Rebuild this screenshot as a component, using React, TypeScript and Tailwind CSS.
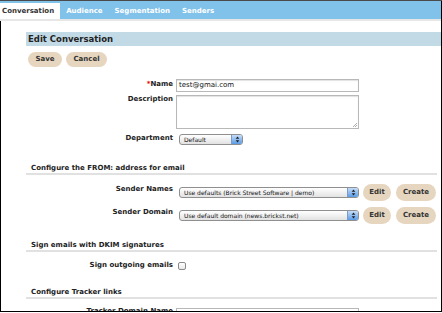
import type { ReactNode } from 'react'

const labelCls = 'w-[147px] shrink-0 text-right text-[7px] font-bold leading-[9px] text-[#222]'

function Pill({ children, className = '' }: { children: ReactNode; className?: string }) {
  return (
    <div
      className={`flex items-center justify-center rounded-full bg-[#e6d6bf] text-[7px] font-bold text-[#333] ${className}`}
    >
      {children}
    </div>
  )
}

function Select({ value, className = '' }: { value: string; className?: string }) {
  return (
    <div
      className={`flex h-[11px] items-stretch overflow-hidden rounded-[3px] border border-[#8f8f8f] bg-linear-to-b from-white to-[#e2e2e2] ${className}`}
    >
      <span className="flex flex-1 items-center whitespace-nowrap pl-[4px] text-[6px] leading-none text-[#111]">
        {value}
      </span>
      <span className="flex w-[11px] items-center justify-center border-l border-[#7a9cc8] bg-linear-to-b from-[#c4dcf8] to-[#5a9be6]">
        <svg width="5" height="7" viewBox="0 0 5 7">
          <path d="M2.5 0.5 L4.3 2.8 H0.7 Z" fill="#1c1c1c" />
          <path d="M2.5 6.5 L0.7 4.2 H4.3 Z" fill="#1c1c1c" />
        </svg>
      </span>
    </div>
  )
}

function Section({ title, className = '' }: { title: string; className?: string }) {
  return (
    <div
      className={`mr-[4px] border-b-2 border-[#e1e1e1] pl-[5px] text-[7px] font-bold leading-[10px] text-[#222] ${className}`}
    >
      {title}
    </div>
  )
}

export default function App() {
  return (
    <div
      className="h-[313px] w-[442px] overflow-hidden border-t border-[#4a4a4a] bg-white"
      style={{ fontFamily: '"DejaVu Sans", Verdana, sans-serif' }}
    >
      {/* Tabs */}
      <div className="flex h-[18px] items-end border-r border-black bg-[#80c2ea]">
        <div className="flex h-[16px] items-center bg-white pl-[2px] pr-[6px] text-[7px] font-bold text-[#333]">
          Conversation
        </div>
        {['Audience', 'Segmentation', 'Senders'].map((t) => (
          <div key={t} className="flex h-[16px] items-center px-[6px] text-[7px] font-bold text-white">
            {t}
          </div>
        ))}
      </div>
      <div className="h-[2px] border-r border-black bg-[#e7e7e7]" />

      <div className="h-[291px] overflow-hidden border-b border-l border-r border-black pl-[25px]">
        {/* Header */}
        <div className="mt-[11px] flex h-[14px] items-center bg-[#c2d9e6] pl-[2px] text-[8.5px] font-bold text-[#222]">
          Edit Conversation
        </div>

        <div className="mt-[6px] flex gap-[4px] pl-[2px]">
          <Pill className="h-[15px] w-[34px]">Save</Pill>
          <Pill className="h-[15px] w-[41px]">Cancel</Pill>
        </div>

        {/* Name */}
        <div className="mt-[12px] flex items-start gap-[3px]">
          <div className={`${labelCls} pt-[1px]`}>
            <span className="text-[#e00]">*</span>Name
          </div>
          <div className="flex h-[13px] w-[183px] items-center border border-[#b8b8b8] pl-[2px] text-[7px] text-[#111] shadow-[inset_0_1px_1px_rgba(0,0,0,0.12)]">
            test@gmai.com
          </div>
        </div>

        {/* Description */}
        <div className="mt-[3px] flex items-start gap-[3px]">
          <div className={labelCls}>Description</div>
          <div className="relative h-[34px] w-[183px] border border-[#b8b8b8] shadow-[inset_0_1px_1px_rgba(0,0,0,0.12)]">
            <svg className="absolute bottom-[1px] right-[1px]" width="5" height="5" viewBox="0 0 5 5">
              <path d="M1 5 L5 1 M3 5 L5 3" stroke="#9a9a9a" strokeWidth="0.8" />
            </svg>
          </div>
        </div>

        {/* Department */}
        <div className="mt-[5px] flex items-start gap-[3px]">
          <div className={labelCls}>Department</div>
          <Select value="Default" className="ml-[3px] w-[64px]" />
        </div>

        <Section title="Configure the FROM: address for email" className="mt-[18px]" />

        {/* Sender Names */}
        <div className="mt-[9px] flex items-start gap-[3px]">
          <div className={`${labelCls} pt-[1px]`}>Sender Names</div>
          <Select value="Use defaults (Brick Street Software | demo)" className="ml-[3px] mt-[3px] w-[180px]" />
          <Pill className="ml-[1px] h-[17px] w-[28px]">Edit</Pill>
          <Pill className="ml-[2px] h-[17px] w-[40px]">Create</Pill>
        </div>

        {/* Sender Domain */}
        <div className="mt-[6px] flex items-start gap-[3px]">
          <div className={`${labelCls} pt-[1px]`}>Sender Domain</div>
          <Select value="Use default domain (news.brickst.net)" className="ml-[3px] mt-[3px] w-[180px]" />
          <Pill className="ml-[1px] h-[17px] w-[28px]">Edit</Pill>
          <Pill className="ml-[2px] h-[17px] w-[40px]">Create</Pill>
        </div>

        <Section title="Sign emails with DKIM signatures" className="mt-[16px]" />

        <div className="mt-[9px] flex items-center gap-[3px]">
          <div className={labelCls}>Sign outgoing emails</div>
          <div className="ml-[2px] h-[8px] w-[8px] rounded-[2px] border border-[#8a8a8a] bg-linear-to-b from-white to-[#e8e8e8]" />
        </div>

        <Section title="Configure Tracker links" className="mt-[17px]" />

        <div className="mt-[8px] flex items-start gap-[3px]">
          <div className={labelCls}>Tracker Domain Name</div>
          <div className="mt-[1px] h-[13px] w-[183px] border border-[#b8b8b8]" />
        </div>
      </div>
    </div>
  )
}
